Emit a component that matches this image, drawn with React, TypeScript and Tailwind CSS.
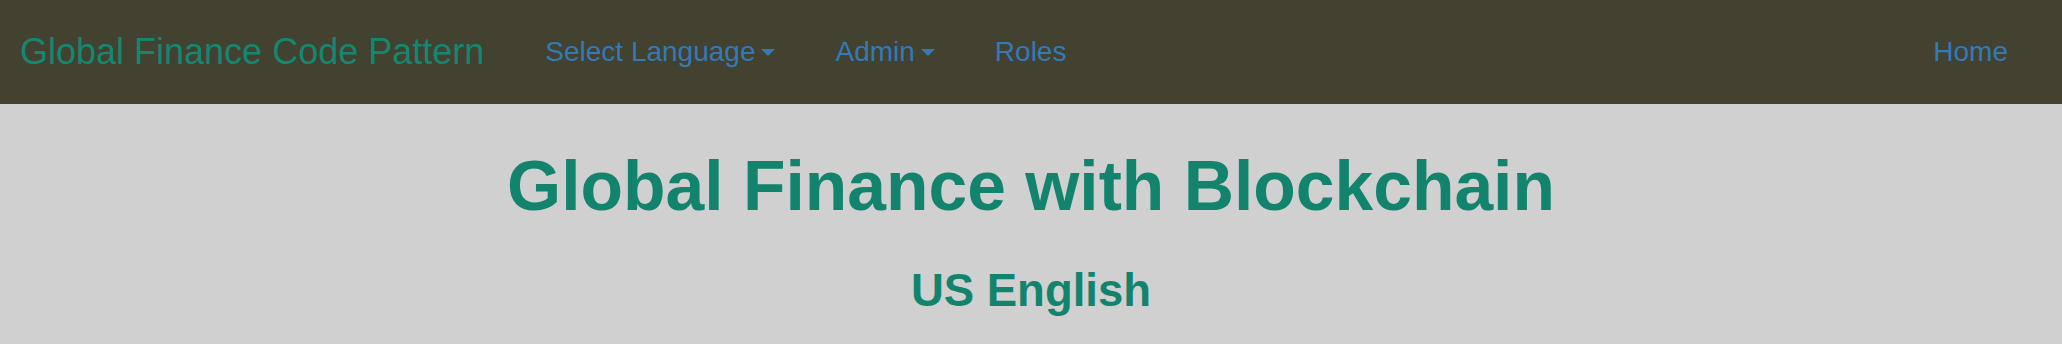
import { ReactNode } from "react";

const navFont = { fontFamily: '"Liberation Sans", Arial, Helvetica, sans-serif' };

function Caret() {
  return (
    <span className="ml-[6px] inline-block h-0 w-0 border-x-[7px] border-t-[7px] border-x-transparent border-t-current align-middle" />
  );
}

function NavLink({ children, dropdown }: { children: ReactNode; dropdown?: boolean }) {
  return (
    <a href="#" className="flex items-center px-[30px] text-[28px] text-[#337ab7]">
      <span>{children}</span>
      {dropdown && <Caret />}
    </a>
  );
}

export default function App() {
  return (
    <div className="min-h-[344px] bg-[#d0d0d0]" style={navFont}>
      <nav className="flex h-[104px] items-center bg-[#434130] pl-[20px] pr-[24px]">
        <a href="#" className="pr-[31px] text-[36px] text-[#13876f]">
          Global Finance Code Pattern
        </a>
        <NavLink dropdown>Select Language</NavLink>
        <NavLink dropdown>Admin</NavLink>
        <NavLink>Roles</NavLink>
        <div className="ml-auto">
          <NavLink>Home</NavLink>
        </div>
      </nav>
      <main className="pt-[44px] text-center text-[#12846e]">
        <h1 className="text-[69.6px] font-bold leading-[1.1]">
          Global Finance with Blockchain
        </h1>
        <h3 className="mt-[41px] text-[45.5px] font-bold leading-[1.1]">
          US English
        </h3>
      </main>
    </div>
  );
}
